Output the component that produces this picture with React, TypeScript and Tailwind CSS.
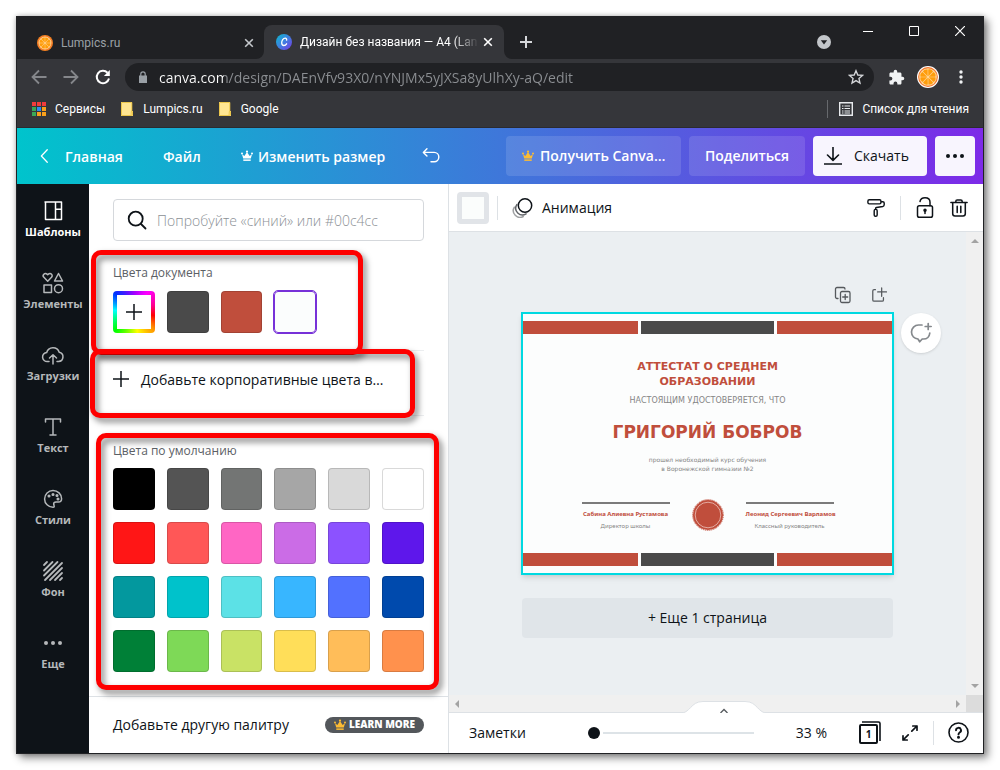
import type { ReactNode } from "react";

const defaultColors = [
  "#000000", "#545454", "#737574", "#a6a6a6", "#d9d9d9", "#ffffff",
  "#ff1616", "#ff5757", "#ff66c4", "#cb6ce6", "#8c52ff", "#5e17eb",
  "#03989e", "#00c2cb", "#5ce1e6", "#38b6ff", "#5271ff", "#004aad",
  "#008037", "#7ed957", "#c9e265", "#ffde59", "#ffbd59", "#ff914d",
];

function Icon({ children, className = "", box = 24, w = 1.5 }: { children: ReactNode; className?: string; box?: number; w?: number }) {
  return (
    <svg className={className} viewBox={`0 0 ${box} ${box}`} fill="none" stroke="currentColor" strokeWidth={w} strokeLinecap="round" strokeLinejoin="round" aria-hidden="true">
      {children}
    </svg>
  );
}

function Orange({ className = "", ring = "#f58220" }: { className?: string; ring?: string }) {
  return (
    <svg className={className} viewBox="0 0 24 24" aria-hidden="true">
      <circle cx="12" cy="12" r="12" fill={ring} />
      <circle cx="12" cy="12" r="10.8" fill="#f4762a" />
      <circle cx="12" cy="12" r="9.6" fill="#ffd79a" />
      {[0, 45, 90, 135, 180, 225, 270, 315].map((a) => (
        <path key={a} d="M12 11 L9.2 4.4 Q12 2.2 14.8 4.4 Z" fill="#ff9d0a" transform={`rotate(${a + 22} 12 12)`} />
      ))}
    </svg>
  );
}

function Crown({ className = "" }: { className?: string }) {
  return (
    <svg className={className} viewBox="0 0 12 12" fill="currentColor" aria-hidden="true">
      <path d="M2.2 8.4 1 4.3l2.4 1.6L6 2l2.6 3.9L11 4.3 9.8 8.4Z" />
      <circle cx="1" cy="3.6" r="1" />
      <circle cx="6" cy="1.6" r="1.1" />
      <circle cx="11" cy="3.6" r="1" />
      <path d="M2.3 9.4h7.4v1.5H2.3z" />
    </svg>
  );
}

function Close({ className = "" }: { className?: string }) {
  return (
    <Icon className={className} box={10} w={1.6}>
      <path d="M1.2 1.2l7.6 7.6M8.8 1.2 1.2 8.8" strokeLinecap="butt" />
    </Icon>
  );
}

function Folder() {
  return (
    <svg className="h-[14px] w-3" viewBox="0 0 12 14" aria-hidden="true">
      <path d="M0 0h11v9h1v5H0z" fill="#ffe592" />
      <path d="M.5 .5h10.3v9M.5 .5v13h9.8M10.3 9.5h1.2v3.9h-1.4z" fill="none" stroke="#ecc64b" />
    </svg>
  );
}

function BrowserChrome() {
  return (
    <div className="bg-[#35363a] font-['Roboto','Open_Sans',sans-serif] text-[12px] text-white">
      <div className="flex h-[42px] items-start bg-[#202124]">
        <div className="flex h-[42px] w-[247px] items-center pt-[9px] pr-[10px] pl-5 text-[#9aa0a6]">
          <Orange className="h-4 w-4" />
          <span className="ml-2 flex-1">Lumpics.ru</span>
          <button aria-label="Закрыть вкладку"><Close className="h-[10px] w-[10px] text-[#c5c8cc]" /></button>
        </div>
        <div className="relative mt-2 flex h-[34px] w-[240px] items-center rounded-t-lg bg-[#35363a] pr-[11px] pl-3">
          <svg className="absolute bottom-0 -left-2 h-2 w-2" viewBox="0 0 8 8" aria-hidden="true"><path d="M8 0v8H0a8 8 0 0 0 8-8z" fill="#35363a" /></svg>
          <svg className="absolute -right-2 bottom-0 h-2 w-2" viewBox="0 0 8 8" aria-hidden="true"><path d="M0 0v8h8a8 8 0 0 1-8-8z" fill="#35363a" /></svg>
          <svg className="h-4 w-4 shrink-0" viewBox="0 0 16 16" aria-hidden="true">
            <defs>
              <linearGradient id="cv" x1="0" y1="0" x2="1" y2="1">
                <stop offset="0" stopColor="#0abccf" />
                <stop offset=".5" stopColor="#3f7fe0" />
                <stop offset="1" stopColor="#7a35e5" />
              </linearGradient>
            </defs>
            <circle cx="8" cy="8" r="8" fill="url(#cv)" />
            <path d="M10.6 6.2c.3-1-.2-2-1.4-2C7.200 4.200 5.700 6.600 5.700 8.700c0 1.800.9 2.800 2.200 2.800 1.200 0 2.100-.7 2.700-1.700" fill="none" stroke="#fff" strokeWidth="1.300" strokeLinecap="round" />
          </svg>
          <span className="mr-1 ml-2 flex-1 overflow-hidden whitespace-nowrap [mask-image:linear-gradient(to_right,black_85%,transparent)]">Дизайн без названия — A4 (Lan</span>
          <button aria-label="Закрыть вкладку"><Close className="h-[10px] w-[10px] text-white" /></button>
        </div>
        <button aria-label="Новая вкладка" className="mt-[19px] ml-4 text-[#d5d7da]">
          <Icon className="h-3 w-3" box={12} w={2}><path d="M6 0v12M0 6h12" strokeLinecap="butt" /></Icon>
        </button>
        <button aria-label="Поиск вкладок" className="mt-[18px] mr-8 ml-auto">
          <svg className="h-[14px] w-[14px]" viewBox="0 0 14 14"><circle cx="7" cy="7" r="7" fill="#c3c6ca" /><path d="M3.800 5.200h6.400L7 9.400z" fill="#202124" /></svg>
        </button>
        <div className="mt-[9px] mr-[18px] flex gap-9">
          <button aria-label="Свернуть"><svg className="h-[10px] w-[10px]" viewBox="0 0 10 10"><path d="M0 5.500h10" stroke="#fff" /></svg></button>
          <button aria-label="Развернуть"><svg className="h-[10px] w-[10px]" viewBox="0 0 10 10"><path d="M.5 .5h9v9h-9z" stroke="#fff" fill="none" /></svg></button>
          <button aria-label="Закрыть"><svg className="h-[10px] w-[10px]" viewBox="0 0 10 10"><path d="M0 0l10 10M10 0 0 10" stroke="#fff" strokeWidth="1.200" /></svg></button>
        </div>
      </div>
      <div className="flex h-9 items-center pr-5 pl-[14px]">
        <button aria-label="Назад" className="w-8 text-[#85878b]"><Icon className="h-4 w-4" box={16} w={1.8}><path d="M15.500 8H2M8 1.500 1.500 8 8 14.500" strokeLinecap="butt" strokeLinejoin="miter" /></Icon></button>
        <button aria-label="Вперёд" className="w-8 text-[#85878b]"><Icon className="h-4 w-4" box={16} w={1.8}><path d="M.5 8H14M8 1.500 14.500 8 8 14.500" strokeLinecap="butt" strokeLinejoin="miter" /></Icon></button>
        <button aria-label="Обновить" className="w-[30px] text-white"><Icon className="h-4 w-4" box={16} w={2}><path d="M14 9.500A6.200 6.200 0 1 1 12.500 3.700" strokeLinecap="butt" /><path d="M14.800 1v6H8.900z" fill="currentColor" stroke="none" /></Icon></button>
        <div className="flex h-7 flex-1 items-center rounded-full bg-[#202124] pr-[10px] pl-[14px]">
          <svg className="h-3 w-2" viewBox="0 0 8 12" aria-hidden="true"><path d="M0 4.500h8V12H0z" fill="#9aa0a6" /><path d="M1.800 5V3a2.200 2.200 0 0 1 4.400 0v2" fill="none" stroke="#9aa0a6" strokeWidth="1.200" /></svg>
          <input aria-label="Адрес" readOnly value="canva.com/design/DAEnVfv93X0/nYNJMx5yJXSa8yUlhXy-aQ/edit" className="ml-3 min-w-0 flex-1 bg-[linear-gradient(90deg,#fff_65px,#8b8e92_65px)] bg-clip-text font-['Open_Sans',sans-serif] text-[14px] text-transparent outline-none" />
          <button aria-label="В закладки" className="text-[#d5d7da]"><Icon className="h-4 w-4" box={24} w={2}><path d="M12 2.500l2.700 6.500 7 .6-5.300 4.600 1.600 6.900-6-3.700-6 3.700 1.600-6.900L2.300 9.600l7-.6z" strokeLinejoin="miter" /></Icon></button>
        </div>
        <button aria-label="Расширения" className="ml-[14px] text-[#f1f3f4]">
          <svg className="h-[17px] w-[17px]" viewBox="0 0 24 24" fill="currentColor"><path d="M20.500 11H19V7c0-1.100-.9-2-2-2h-4V3.500a2.500 2.500 0 0 0-5 0V5H4c-1.100 0-2 .9-2 2v3.800h1.500a2.700 2.700 0 0 1 0 5.400H2V20c0 1.100.9 2 2 2h3.800v-1.500a2.700 2.700 0 0 1 5.400 0V22H17c1.100 0 2-.9 2-2v-4h1.500a2.500 2.500 0 0 0 0-5z" /></svg>
        </button>
        <button aria-label="Профиль" className="ml-3"><Orange className="h-[22px] w-[22px]" ring="#ffffff" /></button>
        <button aria-label="Меню" className="ml-5"><svg className="h-[14px] w-1" viewBox="0 0 4 14" fill="#f1f3f4"><circle cx="2" cy="2" r="1.700" /><circle cx="2" cy="7" r="1.700" /><circle cx="2" cy="12" r="1.700" /></svg></button>
      </div>
      <div className="flex h-[33px] items-start border-b border-[#2b2b30] pt-[5px] pr-[14px] pl-[15px]">
        <a href="#apps" className="flex items-center">
          <svg className="h-[14px] w-[14px]" viewBox="0 0 14 14" aria-hidden="true">
            {["#f33b3b", "#f33b3b", "#f33b3b", "#3aa757", "#2b8cf0", "#f9a01b", "#3aa757", "#f9a01b", "#f9a01b"].map((c, i) => (
              <rect key={i} x={(i % 3) * 5} y={Math.floor(i / 3) * 5} width="4" height="4" fill={c} />
            ))}
          </svg>
          <span className="ml-[9px]">Сервисы</span>
        </a>
        <a href="#lumpics" className="ml-4 flex items-center gap-[10px]"><Folder />Lumpics.ru</a>
        <a href="#google" className="ml-4 flex items-center gap-[10px]"><Folder />Google</a>
        <a href="#reading" className="ml-auto flex items-center border-l border-[#67696d] pl-[11px]">
          <svg className="h-[14px] w-[14px]" viewBox="0 0 14 14" fill="none" stroke="#e8eaed" aria-hidden="true"><path strokeWidth="1.400" d="M.7 .7h12.600v12.600H.7z" /><path d="M3 4h1.500M5.500 4H11M3 6.500h1.500M5.500 6.500H11M3 9h1.500M5.500 9H11M3 11h1.500M5.500 11H11" /></svg>
          <span className="ml-[9px]">Список для чтения</span>
        </a>
      </div>
    </div>
  );
}

function EditorHeader() {
  return (
    <header className="flex h-14 items-center bg-[linear-gradient(90deg,#00c4cc_0%,#7d2ae8_100%)] pr-2 pl-[22px] text-[14px] font-semibold text-white">
      <a href="#home" className="flex w-[124px] items-center">
        <Icon className="mr-[15px] h-[14px] w-[11px]" box={14} w={1.6}><path d="M10.500 -1 3 7l7.500 8" /></Icon>
        Главная
      </a>
      <button className="w-[78px] text-left">Файл</button>
      <button className="flex w-[180px] items-center gap-[5px] whitespace-nowrap"><Crown className="h-3 w-3" />Изменить размер</button>
      <button aria-label="Отменить"><Icon className="h-[18px] w-5" box={20} w={1.6}><path d="M5.500 2 1.500 6l4 4M2 6h11.500a5.200 5.200 0 0 1 0 10.400H10" /></Icon></button>
      <div className="ml-auto flex gap-2">
        <button className="flex h-10 w-[175px] items-center gap-[6px] rounded-sm bg-white/12 pb-px pl-4 whitespace-nowrap"><Crown className="h-3 w-3 text-[#fdbc33]" />Получить Canva…</button>
        <button className="h-10 w-[116px] rounded-sm bg-white/12 pb-px">Поделиться</button>
        <button className="flex h-10 w-[114px] items-center gap-3 rounded-sm bg-[#f8f5fe] pb-px pl-[11px] font-normal text-[#0e1318]">
          <Icon className="h-[18px] w-[18px]" box={18} w={1.6}><path d="M9 0v13M3.500 8 9 13.300 14.500 8M.5 17h17" /></Icon>Скачать
        </button>
        <button aria-label="Ещё" className="flex h-10 w-10 items-center justify-center rounded-sm bg-[#f8f5fe] text-[#0e1318]">
          <svg className="h-1 w-[18px]" viewBox="0 0 18 4" fill="currentColor"><circle cx="2" cy="2" r="2" /><circle cx="9" cy="2" r="2" /><circle cx="16" cy="2" r="2" /></svg>
        </button>
      </div>
    </header>
  );
}

const navItems: { label: string; icon: ReactNode }[] = [
  { label: "Шаблоны", icon: <path d="M4 3h16.500v17.500H4.500V3M14.500 3v17.500M14.500 10.200h6" /> },
  { label: "Элементы", icon: <><path d="M6.700 10.200 2.900 6.300a2.200 2.200 0 0 1 3.100-3.200l.7.700.7-.7a2.200 2.200 0 0 1 3.100 3.200zM17.500 2.500l4 7.500h-8zM3 14h7.500v7.500H3z" /><circle cx="17.500" cy="17.700" r="4" /></> },
  { label: "Загрузки", icon: <path d="M8 18.500H6.500a4.500 4.500 0 0 1-.8-9 6.500 6.500 0 0 1 12.500-.3 4.700 4.700 0 0 1-.7 9.300H16M12 21v-9M8.500 15l3.500-3.300L15.500 15" /> },
  { label: "Текст", icon: <path d="M4.500 7V4h15v3M12 4v16M9 20h6" /> },
  { label: "Стили", icon: <><path d="M12 3.500a8.300 8.300 0 1 0 0 16.800c2 0 1-1.800.7-3-.3-1.500.8-2.300 2.200-2.300h2.500c1.800 0 3.200-1 3.200-3.300 0-4.500-3.900-8.200-8.600-8.200z" /><circle cx="8" cy="9" r=".8" fill="currentColor" /><circle cx="12" cy="7.500" r=".8" fill="currentColor" /><circle cx="16" cy="8.500" r=".8" fill="currentColor" /><circle cx="17" cy="12" r=".8" fill="currentColor" /></> },
  { label: "Фон", icon: <path strokeWidth="1.800" d="M3 6l3-3M3 11.500 11.500 3M3 16.500 16.500 3M4 21 21 4M9 21 21 9M14 21l7-7M19 21l2-2" /> },
  { label: "Еще", icon: <g fill="currentColor" stroke="none"><circle cx="5" cy="12" r="2" /><circle cx="12" cy="12" r="2" /><circle cx="19" cy="12" r="2" /></g> },
];

function SideNav() {
  return (
    <nav className="w-[72px] shrink-0 bg-[#0e1318]">
      {navItems.map((item, i) => (
        <button key={item.label} className={`flex h-[72px] w-full flex-col items-center pt-[15px] text-[11px] leading-4 font-bold ${i === 0 ? "text-white" : "text-[#b5b8ba]"}`}>
          <Icon className="h-6 w-6">{item.icon}</Icon>
          <span className="mt-px">{item.label}</span>
        </button>
      ))}
    </nav>
  );
}

function Swatch({ color, selected = false }: { color: string; selected?: boolean }) {
  return (
    <button
      aria-label={color}
      className={selected ? "h-[42px] rounded-sm border border-[#7731d8] outline outline-[#7731d8]" : "h-[42px] rounded-sm border border-black/15"}
      style={{ backgroundColor: color }}
    />
  );
}

function ColorPanel() {
  return (
    <section className="relative flex w-[360px] shrink-0 flex-col border-r border-[#dde1e5] bg-white text-[#0e1318]">
      <div className="flex flex-1 flex-col px-6 pt-[15px]">
        <label className="flex h-[42px] items-center gap-[10px] rounded-sm border border-[#d5d8dc] px-[13px]">
          <Icon className="h-5 w-5 shrink-0" box={20} w={1.8}><circle cx="8.700" cy="8.700" r="7" /><path d="M14 14l4.500 4.500" /></Icon>
          <input aria-label="Поиск цвета" placeholder="Попробуйте «синий» или #00c4cc" className="min-w-0 flex-1 bg-transparent text-[14px] font-light outline-none placeholder:text-[#8b9095]" />
        </label>
        <h2 className="mt-6 text-[12px] leading-4 text-[#5b6065]">Цвета документа</h2>
        <div className="mt-[10px] grid grid-cols-6 gap-3">
          <button aria-label="Добавить цвет" className="h-[42px] rounded-sm bg-[conic-gradient(#a000ff,#f0f_35deg,#ff0090_70deg,#f00_100deg,#ff9000_130deg,#ff0_170deg,#0f0_225deg,#0ff_275deg,#0030ff_315deg,#a000ff)] p-1">
            <span className="flex h-full items-center justify-center bg-white"><Icon className="h-4 w-4" box={16}><path d="M8 0v16M0 8h16" /></Icon></span>
          </button>
          <Swatch color="#4a4a4a" />
          <Swatch color="#c04e3c" />
          <Swatch color="#fbfdfd" selected />
        </div>
        <button className="mt-[17px] flex h-[66px] items-center gap-3 border-y border-[#eceef0] pb-2 text-[14px] whitespace-nowrap">
          <Icon className="h-4 w-4" box={16}><path d="M8 0v16M0 8h16" /></Icon>
          Добавьте корпоративные цвета в…
        </button>
        <h2 className="mt-[27px] text-[12px] leading-4 text-[#5b6065]">Цвета по умолчанию</h2>
        <div className="mt-[9px] grid grid-cols-6 gap-3">
          {defaultColors.map((c) => <Swatch key={c} color={c} />)}
        </div>
      </div>
      <div className="flex h-[57px] items-center justify-between border-t border-[#dde1e5] px-6 pb-px">
        <span className="text-[14px]">Добавьте другую палитру</span>
        <a href="#learn" className="flex h-4 w-[99px] items-center justify-center gap-[3px] rounded-full bg-[#53575b] text-[10px] font-extrabold whitespace-nowrap text-white">
          <Crown className="h-3 w-3 text-[#fdbc33]" />LEARN MORE
        </a>
      </div>
      <div className="pointer-events-none absolute top-[66px] left-[2px] h-[105px] w-[272px] rounded-[10px] border-[5px] border-[#fe0000] drop-shadow-[3px_4px_3px_rgba(0,0,0,0.5)]" />
      <div className="pointer-events-none absolute top-[165px] left-px h-[69px] w-[325px] rounded-[10px] border-[5px] border-[#fe0000] drop-shadow-[3px_4px_3px_rgba(0,0,0,0.5)]" />
      <div className="pointer-events-none absolute top-[249px] left-[7px] h-[257px] w-[343px] rounded-[10px] border-[5px] border-[#fe0000] drop-shadow-[3px_4px_3px_rgba(0,0,0,0.5)]" />
    </section>
  );
}

function ObjectToolbar() {
  return (
    <div className="flex h-12 items-center border-b border-[#dde1e5] bg-white pr-[15px] pl-2">
      <button aria-label="Цвет фона" className="h-8 w-8 rounded-sm border-[5px] border-[#e1e4e8] bg-[#fbfdfc]" />
      <span className="ml-2 h-6 w-px bg-[#dde1e5]" />
      <button className="ml-[14px] flex items-center gap-[9px] text-[14px]">
        <Icon className="h-5 w-[21px]" box={20} w={1.5}><circle cx="12.500" cy="7.500" r="6.700" /><path d="M4.300 6.600a6.700 6.700 0 0 0 9.300 9.200" opacity=".65" /><path d="M1.800 9.200a6.700 6.700 0 0 0 9 9.300" opacity=".4" /></Icon>
        Анимация
      </button>
      <button aria-label="Копировать стиль" className="ml-auto"><Icon className="h-5 w-[18px]" box={20} w={1.6}><rect x="1" y=".9" width="14.500" height="4.500" rx="1.500" /><path d="M16 3h1.500c1 0 1.600.6 1.600 1.500v2c0 1-.6 1.700-1.600 1.900l-7 1c-.6.100-.9.500-.9 1v1" /><rect x="8" y="11.500" width="3.300" height="7.700" rx="1.500" /></Icon></button>
      <span className="ml-[15px] h-6 w-px bg-[#dde1e5]" />
      <button aria-label="Заблокировать" className="ml-[13px]"><Icon className="h-[22px] w-[22px]" box={22} w={1.5}><rect x="3.500" y="8.700" width="15" height="11.500" rx="1.800" /><path d="M6 4.500C6.500 2 8.500 .8 11 .8c3 0 5 1.800 5 4.500v3.400M11 14v2.600" /><circle cx="11" cy="13.300" r="1" fill="currentColor" /></Icon></button>
      <button aria-label="Удалить" className="ml-[14px]"><Icon className="h-5 w-[18px]" box={20} w={1.7}><path d="M1 4h18M3 4v12.500a2.500 2.500 0 0 0 2.500 2.500h9a2.500 2.500 0 0 0 2.500-2.500V4M6.500 4V2.500C6.500 1.500 7 1 8 1h4c1 0 1.500.5 1.500 1.500V4M8 8v7M12 8v7" /></Icon></button>
    </div>
  );
}

function Bands() {
  return (
    <div className="grid h-[13px] grid-cols-[115fr_133fr_115fr] gap-[3px]">
      <span className="bg-[#c04e3c]" />
      <span className="bg-[#4a4a4a]" />
      <span className="bg-[#c04e3c]" />
    </div>
  );
}

function Signature({ name, role }: { name: string; role: string }) {
  return (
    <div className="w-[88px] border-t-2 border-[#7b7b7b] text-center font-['Noto_Sans',sans-serif] whitespace-nowrap">
      <p className="mt-[6px] text-[6px] leading-[8px] font-bold text-[#c04e3c]">{name}</p>
      <p className="mt-1 text-[6px] leading-[8px] text-[#858585]">{role}</p>
    </div>
  );
}

function Certificate() {
  return (
    <article className="flex h-[263px] flex-col justify-between border-2 border-[#00d9e1] bg-[#fcfdfd] py-[7px] text-center font-['DejaVu_Sans',sans-serif] shadow-md">
      <Bands />
      <div className="flex h-[219px] flex-col items-center">
        <h1 className="mt-[25px] text-[11px] leading-[15px] font-bold text-[#c04e3c]">АТТЕСТАТ О СРЕДНЕМ<br />ОБРАЗОВАНИИ</h1>
        <p className="mt-[7px] text-[8px] leading-[10px] text-[#858585]">НАСТОЯЩИМ УДОСТОВЕРЯЕТСЯ, ЧТО</p>
        <p className="mt-[15px] text-[17px] leading-[22px] font-bold text-[#c04e3c]">ГРИГОРИЙ БОБРОВ</p>
        <p className="mt-3 text-[6px] leading-[9px] text-[#858585]">прошел необходимый курс обучения<br />в Воронежской гимназии №2</p>
        <div className="mt-[26px] flex gap-[22px]">
          <div className="pt-[3px]"><Signature name="Сабина Алиевна Рустамова" role="Директор школы" /></div>
          <svg className="h-8 w-8" viewBox="0 0 32 32" aria-hidden="true">
            <circle cx="16" cy="16" r="15" fill="#c04e3c" />
            <circle cx="16" cy="16" r="15.300" fill="none" stroke="#c04e3c" strokeDasharray="1.200 .8" />
            <circle cx="16" cy="16" r="12.800" fill="none" stroke="#e4aaa0" strokeWidth="1" />
          </svg>
          <div className="pt-[3px]"><Signature name="Леонид Сергеевич Варламов" role="Классный руководитель" /></div>
        </div>
      </div>
      <Bands />
    </article>
  );
}

function Arrow({ className = "" }: { className?: string }) {
  return <svg className={`h-2 w-2 ${className}`} viewBox="0 0 8 8" aria-hidden="true"><path d="M0 6h8L4 2z" fill="#a3a3a3" /></svg>;
}

function Canvas() {
  return (
    <div className="grid flex-1 grid-cols-[1fr_17px] grid-rows-[1fr_17px] bg-[#ebeff2]">
      <div className="flex flex-col items-center pt-[54px]">
        <div className="w-[373px]">
          <div className="flex justify-end gap-[19px] pr-[7px] text-[#55595d]">
            <button aria-label="Дублировать страницу"><Icon className="h-[18px] w-[18px]" box={18} w={1.3}><path d="M4 12.500H3A1.500 1.500 0 0 1 1.500 11V3A1.500 1.500 0 0 1 3 1.500h6.500A1.500 1.500 0 0 1 11 3" /><rect x="6.500" y="5.500" width="9.500" height="11" rx="1.500" /><path d="M11.200 8.500v5M8.700 11h5" /></Icon></button>
            <button aria-label="Добавить страницу"><Icon className="h-[18px] w-4" box={18} w={1.4}><path d="M5 3H3.500C2.500 3 2 3.500 2 4.500v10c0 1 .5 1.500 1.500 1.500h9c1 0 1.500-.5 1.500-1.500V12M12 1v9.500M7.500 5.500h10" /></Icon></button>
          </div>
          <div className="relative mt-2">
            <Certificate />
            <button aria-label="Добавить комментарий" className="absolute top-px left-full ml-[7px] flex h-10 w-10 items-center justify-center rounded-full bg-white text-[#85898d] shadow">
              <Icon className="h-[22px] w-[22px]" box={22} w={1.7}><path d="M12 3H8.500a7 7 0 0 0-7 7c0 4 3 6.500 6.500 7l1.700 2.800 2.500-2.800h1.300c3.500 0 6-2.500 6.300-6M18.200 1.500v6M15.200 4.500h6" /></Icon>
            </button>
          </div>
          <button className="mx-px mt-[23px] h-10 w-[371px] rounded-sm bg-[#e0e5e9] pb-px text-[14px]">+ Еще 1 страница</button>
        </div>
      </div>
      <div className="flex flex-col items-center justify-between bg-[#f0f0f0] py-[5px]"><Arrow /><Arrow className="rotate-180" /></div>
      <div className="flex items-center justify-between bg-[#f0f0f0] px-1"><Arrow className="-rotate-90" /><Arrow className="rotate-90" /></div>
      <div className="bg-[#dcdcdc]" />
    </div>
  );
}

function BottomBar() {
  return (
    <footer className="relative flex h-[41px] items-center border-t border-[#dde1e5] bg-white pr-[14px] pb-px pl-5 text-[14px]">
      <button aria-label="Показать страницы" className="absolute bottom-full left-[230px]">
        <svg className="block h-3 w-[90px]" viewBox="0 0 90 12"><path d="M0 12.500c12 0 11-12 24-12h42c13 0 12 12 24 12" fill="#fff" stroke="#dde1e5" /><path d="M41.500 12 45 8.500l3.500 3.500" fill="none" stroke="#55595d" strokeWidth="1.300" /></svg>
      </button>
      <button className="w-[119px] text-left">Заметки</button>
      <input type="range" aria-label="Масштаб" min={0} max={100} defaultValue={0} className="h-3 w-[166px] appearance-none bg-[linear-gradient(#dde3e7,#dde3e7)] bg-[length:151px_2px] bg-right bg-no-repeat [&::-webkit-slider-thumb]:h-3 [&::-webkit-slider-thumb]:w-3 [&::-webkit-slider-thumb]:appearance-none [&::-webkit-slider-thumb]:rounded-full [&::-webkit-slider-thumb]:bg-[#0e1318]" />
      <span className="ml-auto">33 %</span>
      <button aria-label="Страница 1" className="ml-8 flex h-6 w-6 items-center">
        <span className="relative mt-[3px] flex h-[20px] w-[19px] items-center justify-center rounded-xs border-2 border-[#0e1318] text-[10px] font-bold">
          1
          <svg className="absolute -top-[5px] -right-[5px] h-[21px] w-[20px]" viewBox="0 0 20 21" fill="none" stroke="#0e1318" strokeWidth="1.600"><path d="M1 1h16.500c1 0 1.500.5 1.500 1.500V20" /></svg>
        </span>
      </button>
      <button aria-label="На весь экран" className="ml-[18px]"><Icon className="h-4 w-[18px]" box={16} w={1.7}><path d="M9.800 6.200 15 1M10.800 1H15v4.200M6.200 9.800 1 15M1 10.800V15h4.200" /></Icon></button>
      <span className="mx-[14px] h-6 w-px bg-[#dde1e5]" />
      <button aria-label="Справка"><Icon className="h-[21px] w-[21px]" box={21} w={1.6}><circle cx="10.500" cy="10.500" r="9.500" /><path strokeWidth="1.900" d="M8 8.300a2.500 2.500 0 1 1 3.700 2.200c-.8.500-1.200.9-1.200 1.900" /><circle cx="10.500" cy="15.300" r=".7" fill="currentColor" /></Icon></button>
    </footer>
  );
}

export default function App() {
  return (
    <div className="flex min-h-screen bg-white p-4 font-['Open_Sans','Noto_Sans',sans-serif]">
      <div className="flex min-w-0 flex-1 flex-col border border-[#202124] shadow-[4px_4px_8px_rgba(0,0,0,0.45),0_0_5px_rgba(0,0,0,0.25)]">
        <BrowserChrome />
        <EditorHeader />
        <div className="flex flex-1 text-[#0e1318]">
          <SideNav />
          <ColorPanel />
          <main className="flex min-w-0 flex-1 flex-col">
            <ObjectToolbar />
            <Canvas />
            <BottomBar />
          </main>
        </div>
      </div>
    </div>
  );
}
